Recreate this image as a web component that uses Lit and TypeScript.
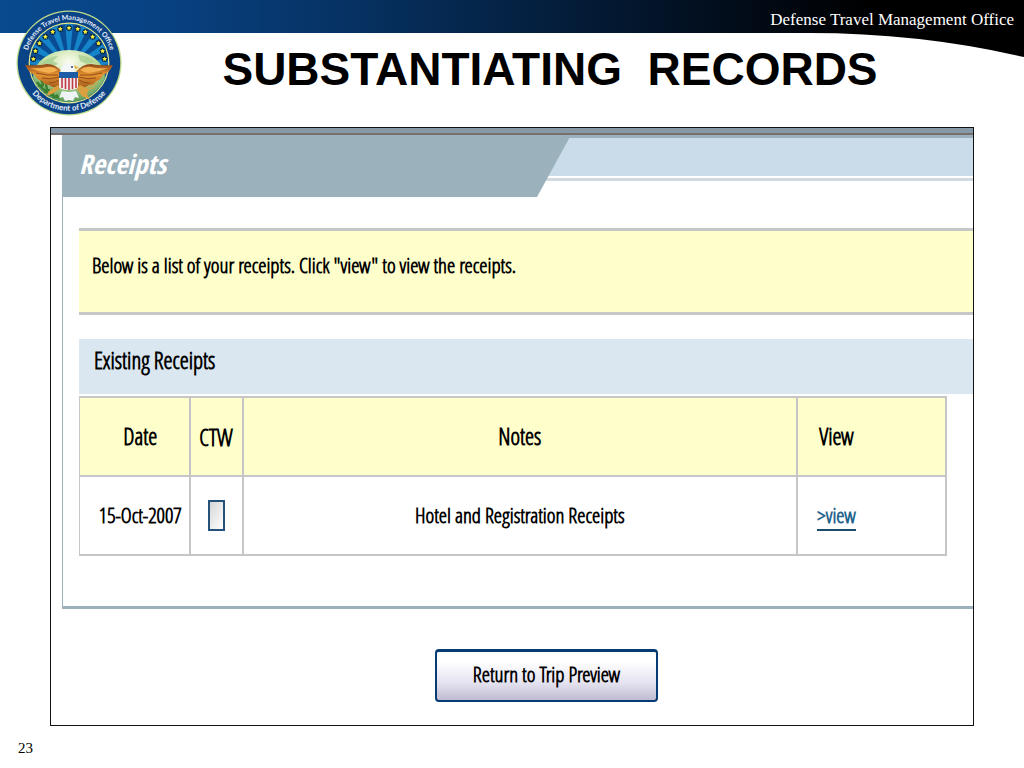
import { LitElement, html, svg, css } from "lit";
import { customElement, property } from "lit/decorators.js";

interface Receipt {
  date: string;
  ctw: boolean;
  notes: string;
}

@customElement("agency-seal")
class AgencySeal extends LitElement {
  static styles = css`
    :host { display: block; }
    svg { display: block; width: 100%; height: auto; }
    .rim-upper, .rim-lower { font-family: Lato, sans-serif; font-weight: 700; fill: #e6eef8; }
    .rim-upper { font-size: 7px; }
    .rim-lower { font-size: 8px; }
  `;

  private star(angle: number) {
    const a = (angle * Math.PI) / 180;
    const cx = 53 + 36 * Math.sin(a);
    const cy = 54 - 36 * Math.cos(a);
    const pts = Array.from({ length: 10 }, (_, i) => {
      const r = i % 2 ? 1.3 : 2.5;
      const t = (i * Math.PI) / 5;
      return `${(cx + r * Math.sin(t)).toFixed(2)},${(cy - r * Math.cos(t)).toFixed(2)}`;
    }).join(" ");
    return svg`<circle cx=${cx} cy=${cy} r="3" fill="#08294d"/><polygon points=${pts} fill="#f4ee3c"/>`;
  }

  private ray(angle: number) {
    const p = (d: number) => {
      const a = ((angle + d) * Math.PI) / 180;
      return `${(53 + 60 * Math.sin(a)).toFixed(2)},${(58 - 60 * Math.cos(a)).toFixed(2)}`;
    };
    return svg`<polygon points=${`53,58 ${p(-5)} ${p(5)}`} fill="#1584c9"/>`;
  }

  render() {
    return html`<svg viewBox="0 0 106 106" role="img" aria-label="Defense Travel Management Office seal">
      <defs>
        <clipPath id="disc"><circle cx="53" cy="53" r="39"/></clipPath>
        <radialGradient id="globe" cx="50%" cy="22%" r="75%">
          <stop offset="0" stop-color="#fbfdf0"/><stop offset=".45" stop-color="#c4dfa0"/><stop offset="1" stop-color="#5b9b54"/>
        </radialGradient>
        <linearGradient id="wing" x1="0" y1="0" x2="0" y2="1">
          <stop offset="0" stop-color="#8c4718"/><stop offset=".45" stop-color="#e79431"/><stop offset="1" stop-color="#a35a1b"/>
        </linearGradient>
        <path id="upper" d="M11.200 63 A43 43 0 1 1 94.800 63"/>
        <path id="lower" d="M5.700 61 A48 48 0 0 0 100.300 61"/>
      </defs>
      <circle cx="53" cy="53" r="52.5" fill="#bcd98a"/>
      <circle cx="53" cy="53" r="51.2" fill="#0b4387"/>
      <circle cx="53" cy="53" r="40.4" fill="#e3eb8c"/>
      <circle cx="53" cy="53" r="39.2" fill="#0a4c93"/>
      <g clip-path="url(#disc)">
        ${[-80, -60, -40, -20, 0, 20, 40, 60, 80].map((a) => this.ray(a))}
        <ellipse cx="53" cy="67" rx="36" ry="27" fill="url(#globe)"/>
        <path d="M26 53q8-7 16-7l-5 5 5 3-9 4zM62 45q10 0 17 7l-8 2-7-3z" fill="#9fca8c" opacity=".7"/>
        <path d="M21 72q10 14 23 16M25 69l2 5M22 76l6-1M30 74l1 6M28 82l6-2M36 79l1 6M37 88l5-3" stroke="#397f32" stroke-width="2.4" fill="none"/>
        <path d="M64 77q12-2 19-8M66 80l16-7M65 83l14-6" stroke="#d9a544" stroke-width="1.3" fill="none"/>
      </g>
      ${[-82, -69, -55, -41, -27, -14, 0, 14, 27, 41, 55, 69, 82].map((a) => this.star(a))}
      <path d="M9 55q14 1 22-1 9 0 15 8l1 14q-8 4-14-1-5 0-7-4-5-1-7-6-6-2-10-10z" fill="url(#wing)"/>
      <path d="M97 55q-14 1-22-1-9 0-15 8l-1 14q8 4 14-1 5 0 7-4 5-1 7-6 6-2 10-10z" fill="url(#wing)"/>
      <path d="M14 58q9 1 17-1 6-1 11 3-5 3-9 3-10-1-19-5zM92 58q-9 1-17-1-6-1-11 3 5 3 9 3 10-1 19-5z" fill="#f3b050"/>
      <path d="M20 63q11 3 22 2M26 68q8 2 17-1M33 73q6 0 10-3M86 63q-11 3-22 2M80 68q-8 2-17-1M73 73q-6 0-10-3" stroke="#8f4b19" stroke-width="1" fill="none"/>
      <path d="M42 75l-9 6-3 5 6-2 8-5zM64 75l9 4-2 5 3 6-8-4-6-8z" fill="#d9a040"/>
      <path d="M44 65q0-8 5-11 4-2 9 1l5 4-5 1 3 6z" fill="#f3f6f6"/>
      <path d="M58 55l5 3-4 1z" fill="#e8b13a"/><circle cx="56" cy="57" r="1" fill="#274766"/>
      <path d="M43 63h19v14q-1 3-9.500 3-8.500 0-9.500-3z" fill="#f5eeee"/>
      <path d="M46 67v11M49.500 67v12M53 67v13M56.500 67v12M60 67v11" stroke="#bd3a46" stroke-width="1.6"/>
      <path d="M43 62h19v6H43z" fill="#1b5ca4"/>
      <path d="M46 81l7 1 7-1 3 7-4-1-2 4-4-1-4 1-2-4-4 1z" fill="#eef4f5"/>
      <text class="rim-upper"><textPath href="#upper" startOffset="50%" text-anchor="middle">Defense Travel Management Office</textPath></text>
      <text class="rim-lower"><textPath href="#lower" startOffset="50%" text-anchor="middle">Department of Defense</textPath></text>
    </svg>`;
  }
}

@customElement("receipts-panel")
class ReceiptsPanel extends LitElement {
  @property({ attribute: false }) receipts: Receipt[] = [];

  static styles = css`
    :host {
      display: block;
      border: 1px solid #111;
      padding-bottom: 23px;
      background: #fff;
      color: #000;
      font: bold 21px/28px "Open Sans Condensed Light", "Roboto Condensed", Roboto, sans-serif;
    }
    .strip { height: 5px; background: #8799a8; border-bottom: 2px solid #776f6c; }
    .panel { margin-left: 11px; border-left: 1px solid #9bb1bb; border-bottom: 3px solid #9bb1bb; padding-bottom: 50px; }
    .tabs {
      height: 62px;
      background: linear-gradient(#9bb1bb 3px, #cadbe9 3px 41px, #fff 41px 43px, #d2dae1 43px 46px, #fff 46px);
    }
    .tab {
      box-sizing: border-box;
      width: 508px;
      max-width: 80%;
      height: 62px;
      margin: 0;
      padding: 11px 16px;
      background: #9bb1bb;
      clip-path: polygon(0 0, 100% 0, calc(100% - 34px) 100%, 0 100%);
      color: #fff;
      font: italic bold 27px/36px "Open Sans Condensed", Roboto, sans-serif;
    }
    .content { padding: 31px 0 0 16px; }
    .note {
      margin: 0 0 24px;
      padding: 20px 13px 33px;
      border: solid #c6c8c6;
      border-width: 3px 0;
      background: #ffffcc;
    }
    .section { margin: 0 0 2px; padding: 7px 15px 20px; background: #dae7f0; font: inherit; font-size: 23px; }
    .table-area { padding-right: 26px; }
    table { width: 100%; table-layout: fixed; border-collapse: collapse; }
    th, td { box-sizing: border-box; height: 79px; padding: 0 0 2px; border: 2px solid #c6c6c8; text-align: center; }
    th { background: #ffffcc; font-size: 23px; }
    .date { width: 110px; padding-left: 12px; border-left-width: 1px; white-space: nowrap; }
    .ctw { width: 53px; padding-bottom: 0; }
    .view { width: 149px; padding-right: 70px; }
    input {
      appearance: none;
      display: block;
      width: 17px;
      height: 31px;
      margin: 0 auto;
      border: 2px solid #24527c;
      background: linear-gradient(120deg, #d6d6d6, #fff);
    }
    a { color: #24638c; text-decoration: none; border-bottom: 2px solid #1c4c6c; }
    .actions { display: flex; justify-content: center; padding: 40px 0 0 69px; }
    button {
      box-sizing: border-box;
      min-width: 223px;
      height: 53px;
      padding: 0 32px 4px;
      border: 2px solid #073b73;
      border-top-width: 3px;
      border-radius: 4px;
      background: linear-gradient(#fff 20%, #e4e2ef 65%, #c0bcd2);
      color: #000;
      font: inherit;
    }
  `;

  render() {
    return html`
      <div class="strip"></div>
      <section class="panel">
        <div class="tabs"><h2 class="tab">Receipts</h2></div>
        <div class="content">
          <p class="note">Below is a list of your receipts. Click "view" to view the receipts.</p>
          <h3 class="section">Existing Receipts</h3>
          <div class="table-area">
            <table>
              <thead>
                <tr><th class="date">Date</th><th class="ctw">CTW</th><th>Notes</th><th class="view">View</th></tr>
              </thead>
              <tbody>
                ${this.receipts.map((r) => html`<tr>
                  <td class="date">${r.date}</td>
                  <td class="ctw"><input type="checkbox" aria-label="CTW" .checked=${r.ctw}></td>
                  <td>${r.notes}</td>
                  <td class="view"><a href="#view">&gt;view</a></td>
                </tr>`)}
              </tbody>
            </table>
          </div>
        </div>
      </section>
      <div class="actions"><button type="button">Return to Trip Preview</button></div>
    `;
  }
}

@customElement("app-root")
class AppRoot extends LitElement {
  static styles = css`
    :host { display: flex; flex-direction: column; min-height: 100vh; background: #fff; font-family: "Liberation Serif", serif; color: #000; }
    header { position: relative; padding: 10px 10px 0 16px; display: grid; grid-template-columns: 106px 1fr; grid-template-rows: auto 1fr; }
    .band { position: absolute; top: 0; left: 0; width: 100%; height: 58px; }
    agency-seal { position: relative; grid-row: 1 / 3; width: 106px; height: 106px; }
    .office { position: relative; margin: 0; text-align: right; font-size: 17px; line-height: 20px; color: #fff; }
    h1 { position: relative; margin: 11px 0 0; padding-right: 36px; text-align: center; white-space: pre; font: bold 46px/56px "Liberation Sans", sans-serif; }
    main { margin: 11px 50px 0; }
    footer { padding: 12px 18px 10px; font-size: 15px; line-height: 20px; }
  `;

  private receipts: Receipt[] = [{ date: "15-Oct-2007", ctw: false, notes: "Hotel and Registration Receipts" }];

  render() {
    return html`
      <header>
        <svg class="band" viewBox="0 0 1024 58" preserveAspectRatio="none" aria-hidden="true">
          <defs><linearGradient id="fade">
            <stop offset="0" stop-color="#084a8e"/><stop offset=".15" stop-color="#084283"/><stop offset=".35" stop-color="#063161"/>
            <stop offset=".53" stop-color="#041f3e"/><stop offset=".7" stop-color="#020e1d"/><stop offset=".85" stop-color="#000"/>
          </linearGradient></defs>
          <path d="M0 0H1024V57Q920 33 810 33H0z" fill="url(#fade)"/>
        </svg>
        <agency-seal></agency-seal>
        <p class="office">Defense Travel Management Office</p>
        <h1>SUBSTANTIATING  RECORDS</h1>
      </header>
      <main><receipts-panel .receipts=${this.receipts}></receipts-panel></main>
      <footer>23</footer>
    `;
  }
}
